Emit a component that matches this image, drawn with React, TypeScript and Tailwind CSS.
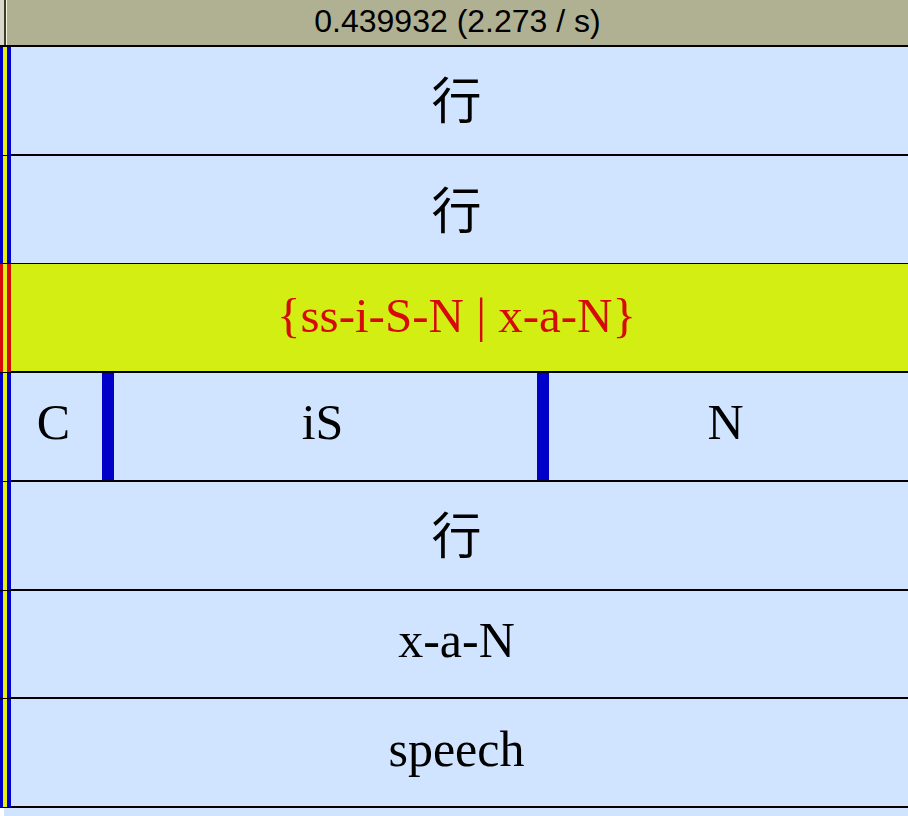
type Segment = { text: string; grow: string };
type Tier = { id: string; segments: Segment[]; selected?: boolean; han?: boolean };

const tiers: Tier[] = [
  { id: "word-1", han: true, segments: [{ text: "行", grow: "flex-1" }] },
  { id: "word-2", han: true, segments: [{ text: "行", grow: "flex-1" }] },
  { id: "variants", selected: true, segments: [{ text: "{ss-i-S-N | x-a-N}", grow: "flex-1" }] },
  {
    id: "phones",
    segments: [
      { text: "C", grow: "flex-[85]" },
      { text: "iS", grow: "flex-[417]" },
      { text: "N", grow: "flex-[353]" },
    ],
  },
  { id: "word-3", han: true, segments: [{ text: "行", grow: "flex-1" }] },
  { id: "syllable", segments: [{ text: "x-a-N", grow: "flex-1" }] },
  { id: "class", segments: [{ text: "speech", grow: "flex-1" }] },
];

function Boundary({ selected }: { selected?: boolean }) {
  const edge = selected ? "bg-[#d60a0a]" : "bg-[#0000c8]";
  return (
    <div className="flex w-[11px] shrink-0 border-b border-black">
      <div className={`w-[3px] ${edge}`} />
      <div className="w-[4px] bg-[#e6ee10]" />
      <div className={`w-[4px] ${edge}`} />
    </div>
  );
}

function TierRow({ tier }: { tier: Tier }) {
  const colors = tier.selected
    ? "bg-[#d2ee12] text-[49px] text-[#d60a0a]"
    : "bg-[#d0e4ff] text-[50px] text-black";
  const rule = tier.id === "word-2" ? "border-b" : "border-b-2";
  const inset = tier.han ? "pt-1" : tier.selected ? "pb-1" : "pb-2";
  return (
    <div className={`flex min-h-16 leading-none ${colors}`}>
      <Boundary selected={tier.selected} />
      <div className={`flex min-w-0 flex-1 border-black ${rule}`}>
        {tier.segments.map((segment, index) => (
          <div
            key={segment.text}
            className={`flex min-w-0 items-center justify-center whitespace-pre pr-1.5 ${inset} ${segment.grow} ${
              index > 0 ? "border-l-12 border-[#0000c8]" : ""
            }`}
          >
            {segment.text}
          </div>
        ))}
      </div>
    </div>
  );
}

export default function App() {
  return (
    <main className="flex min-h-screen flex-col bg-[#d0e4ff] font-['Liberation_Serif','Noto_Sans_CJK_SC',serif]">
      <header className="flex h-[47px] shrink-0 border-b-2 border-black bg-[#b0b092]">
        <div className="w-1 bg-[#d8d8cc]" />
        <div className="w-0.5 bg-[#3c3c28]" />
        <div className="w-px bg-[#f4f4e0]" />
        <div className="flex flex-1 items-center justify-center pb-1 font-['Liberation_Sans',sans-serif] text-[32px] text-black">
          0.439932 (2.273 / s)
        </div>
      </header>
      <section className="grid flex-1 auto-rows-fr" aria-label="Annotation tiers">
        {tiers.map((tier) => (
          <TierRow key={tier.id} tier={tier} />
        ))}
      </section>
      <footer className="flex h-2 shrink-0">
        <div className="w-1 bg-white" />
      </footer>
    </main>
  );
}
